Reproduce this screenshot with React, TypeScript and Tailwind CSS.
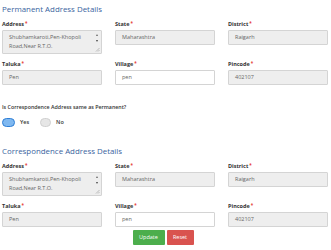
import type { ReactNode } from 'react'

const FONT = "font-['Open_Sans',_'Liberation_Sans',_sans-serif]"

function Label({ text }: { text: string }) {
  return (
    <div className="h-[7px] text-[5.5px] leading-[7px] font-bold text-[#333]">
      {text}
      <span className="relative -top-[1.5px] ml-[1px] text-[4.5px] text-[#e53935]">*</span>
    </div>
  )
}

function Box({ value, readOnly = true }: { value: string; readOnly?: boolean }) {
  return (
    <div
      className={`mt-[2px] h-[15px] rounded-[1px] border border-[#d4d4d4] pl-[6px] text-[5.5px] leading-[13px] text-[#666] ${
        readOnly ? 'bg-[#eeeeee]' : 'bg-white'
      }`}
    >
      {value}
    </div>
  )
}

function AddressBox() {
  return (
    <div className="relative mt-[2px] h-[24px] overflow-hidden rounded-[1px] border border-[#d4d4d4] bg-[#eeeeee] pl-[6px] pr-[12px] pt-[2px] text-[5.5px] leading-[9px] text-[#666]">
      <div>Shubhamkaroti,Pen-Khopoli</div>
      <div>Road,Near R.T.O.</div>
      <div className="h-[3px] overflow-hidden">Office,Pen 402107</div>
      {/* fake scrollbar arrows and resize grip */}
      <span className="absolute right-[3px] top-[3px] h-0 w-0 border-x-[1.5px] border-b-[2px] border-x-transparent border-b-[#666]" />
      <span className="absolute right-[3px] top-[9px] h-0 w-0 border-x-[1.5px] border-t-[2px] border-x-transparent border-t-[#444]" />
      <svg className="absolute bottom-[1px] right-[1px]" width="5" height="5" viewBox="0 0 5 5">
        <path d="M1 4.5 L4.5 1 M3 4.5 L4.5 3" stroke="#999" strokeWidth="0.6" />
      </svg>
    </div>
  )
}

function Col({ children }: { children: ReactNode }) {
  return <div className="flex flex-col">{children}</div>
}

function AddressSection({ title }: { title: string }) {
  return (
    <div>
      <h2 className="h-[17px] text-[7.9px] leading-[17px] text-[#3a64a0]">{title}</h2>
      <div className="mt-[3px] grid grid-cols-3 gap-x-[13px]">
        <Col>
          <Label text="Address" />
          <AddressBox />
        </Col>
        <Col>
          <Label text="State" />
          <Box value="Maharashtra" />
        </Col>
        <Col>
          <Label text="District" />
          <Box value="Raigarh" />
        </Col>
      </div>
      <div className="mt-[7px] grid grid-cols-3 gap-x-[13px]">
        <Col>
          <Label text="Taluka" />
          <Box value="Pen" />
        </Col>
        <Col>
          <Label text="Village" />
          <Box value="pen" readOnly={false} />
        </Col>
        <Col>
          <Label text="Pincode" />
          <Box value="402107" />
        </Col>
      </div>
    </div>
  )
}

export default function App() {
  return (
    <div className={`h-[250px] w-[331px] overflow-hidden bg-white pl-[2px] pr-[3px] pt-[1px] ${FONT}`}>
      <AddressSection title="Permanent Address Details" />

      <div className="mt-[19px] text-[5.3px] font-semibold leading-[7px] text-[#333]">
        Is Correspondence Address same as Permanent?
      </div>
      <div className="mt-[6.5px] flex items-center gap-[5px]">
        <span className="h-[9px] w-[13px] rounded-full border-[1.5px] border-[#2f7fd6] bg-[#7fb8f0]" />
        <span className="text-[5.5px] font-semibold text-[#333]">Yes</span>
        <span className="ml-[6px] h-[9px] w-[11px] rounded-full border border-[#d0d0d0] bg-[#e6e6e6]" />
        <span className="text-[5.5px] font-semibold text-[#333]">No</span>
      </div>

      <div className="mt-[16.5px]">
        <AddressSection title="Correspondence Address Details" />
      </div>

      <div className="mt-[3px] flex justify-center gap-[2px] pr-[4px]">
        <button className="h-[15px] w-[32px] rounded-[1px] bg-[#4cae4c] text-[5.5px] text-white">Update</button>
        <button className="h-[15px] w-[27px] rounded-[1px] bg-[#d9534f] text-[5.5px] text-white">Reset</button>
      </div>
    </div>
  )
}
